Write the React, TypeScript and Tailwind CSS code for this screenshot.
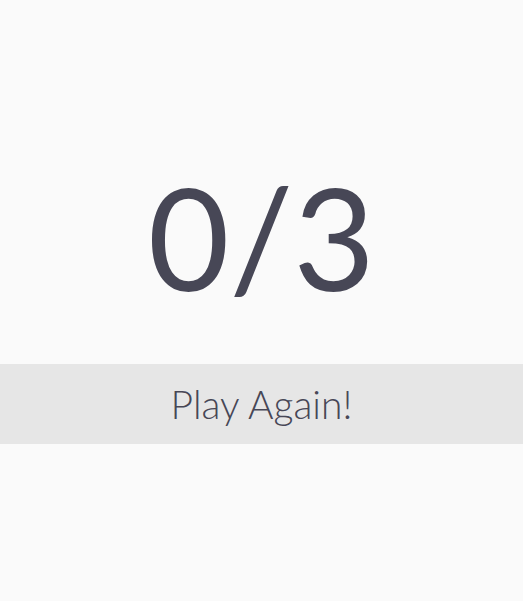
export default function App() {
  return (
    <div
      className="min-h-screen bg-[#fafafa] text-[#474756] flex flex-col"
      style={{ fontFamily: 'Lato, "Open Sans", sans-serif' }}
    >
      <div className="h-[364px] flex items-center justify-center pt-[108px]">
        <div className="text-[141px] font-normal leading-none">0/3</div>
      </div>
      <button className="h-[80px] w-full bg-[#e6e6e6] text-[39px] font-light flex items-center justify-center">
        Play Again!
      </button>
    </div>
  );
}
